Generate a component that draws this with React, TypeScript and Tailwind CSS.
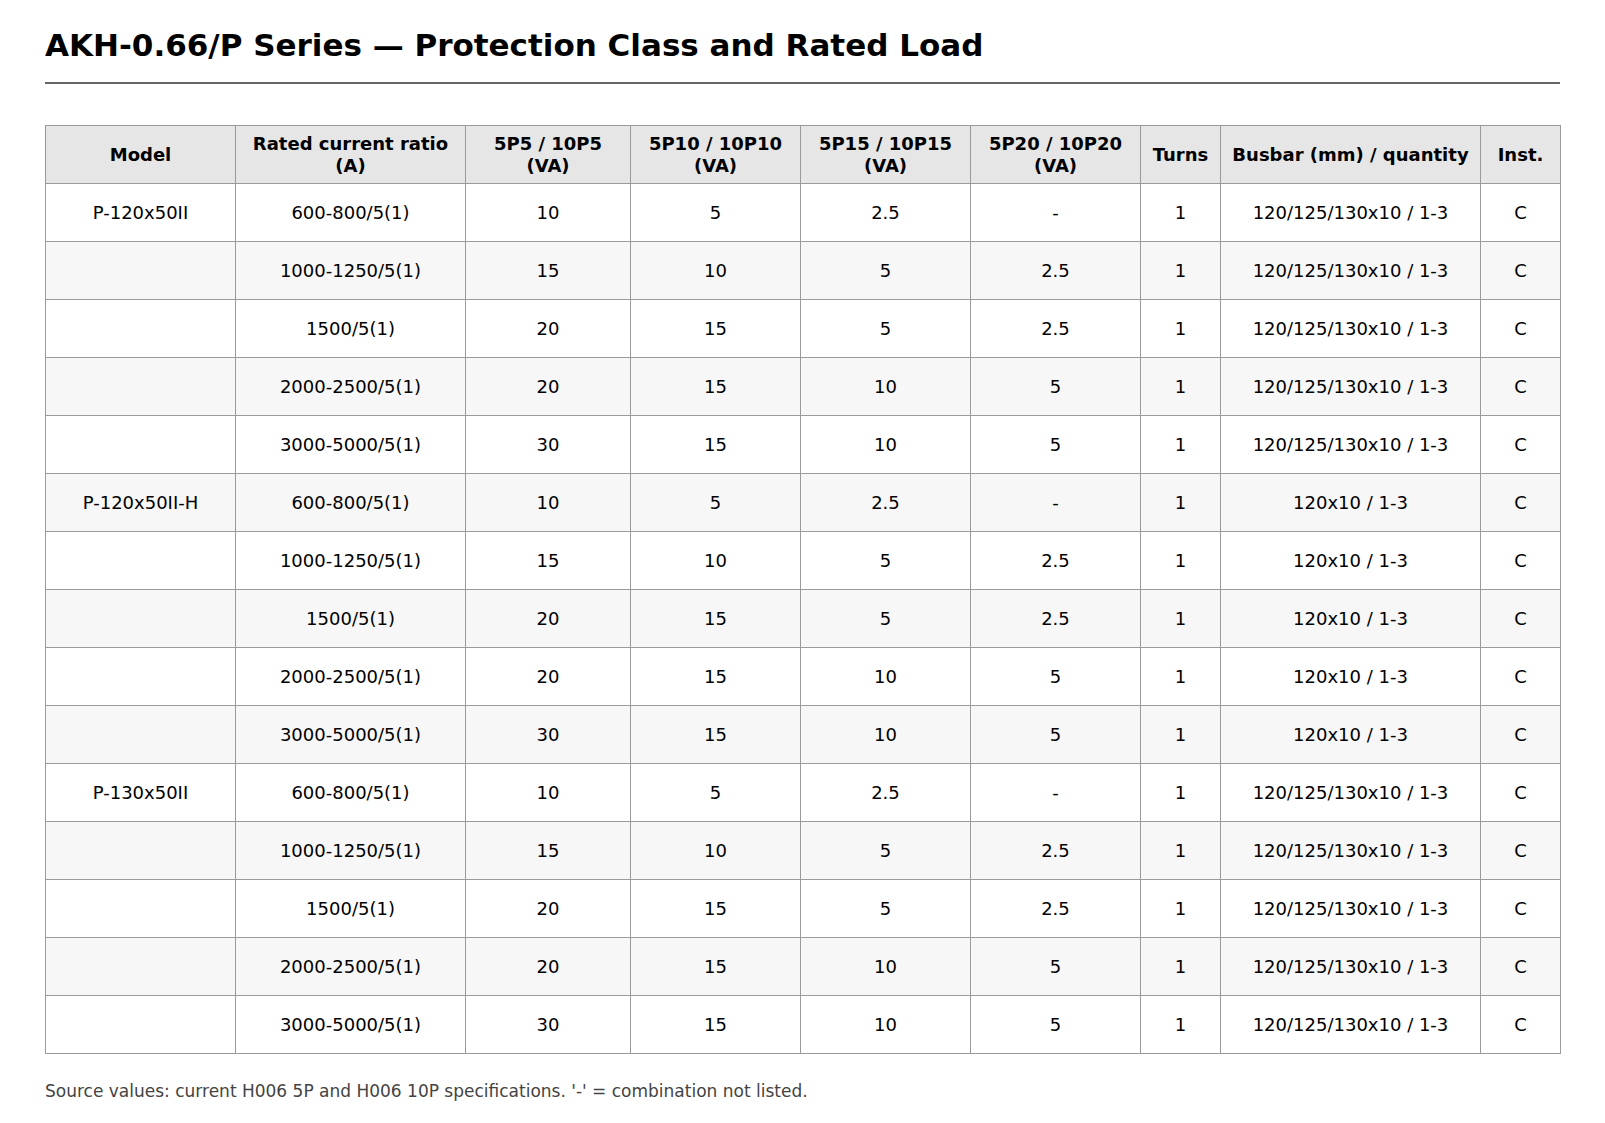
import React from "react";

type Row = [string, string, string, string, string, string, string, string, string];

const ratios = ["600-800/5(1)", "1000-1250/5(1)", "1500/5(1)", "2000-2500/5(1)", "3000-5000/5(1)"];
const vals: [string, string, string, string][] = [
  ["10", "5", "2.5", "-"],
  ["15", "10", "5", "2.5"],
  ["20", "15", "5", "2.5"],
  ["20", "15", "10", "5"],
  ["30", "15", "10", "5"],
];

const groups: [string, string][] = [
  ["P-120x50II", "120/125/130x10 / 1-3"],
  ["P-120x50II-H", "120x10 / 1-3"],
  ["P-130x50II", "120/125/130x10 / 1-3"],
];

const rows: Row[] = [];
groups.forEach(([model, busbar]) => {
  ratios.forEach((r, i) => {
    rows.push([i === 0 ? model : "", r, vals[i][0], vals[i][1], vals[i][2], vals[i][3], "1", busbar, "C"]);
  });
});

const widths = ["w-[190px]", "w-[230px]", "w-[165px]", "w-[170px]", "w-[170px]", "w-[170px]", "w-[80px]", "w-[260px]", "w-[80px]"];

const headers: React.ReactNode[] = [
  "Model",
  <>Rated current ratio<br />(A)</>,
  <>5P5 / 10P5<br />(VA)</>,
  <>5P10 / 10P10<br />(VA)</>,
  <>5P15 / 10P15<br />(VA)</>,
  <>5P20 / 10P20<br />(VA)</>,
  "Turns",
  "Busbar (mm) / quantity",
  "Inst.",
];

export default function App() {
  return (
    <div className="min-h-[1123px] bg-white px-[45px] pt-[27px] text-black" style={{ fontFamily: '"DejaVu Sans", sans-serif' }}>
      <h1 className="border-b-2 border-[#666] pb-[18px] text-[31px] font-bold leading-[1.2]">
        AKH-0.66/P Series — Protection Class and Rated Load
      </h1>
      <table className="mt-[41px] w-full table-fixed border-collapse text-[18px] leading-[1.2]">
        <colgroup>
          {widths.map((w, i) => (
            <col key={i} className={w} />
          ))}
        </colgroup>
        <thead>
          <tr className="bg-[#e6e6e6]">
            {headers.map((h, i) => (
              <th key={i} className="h-[58px] border border-[#9a9a9a] px-[6px] py-0 text-center align-middle font-bold">
                {h}
              </th>
            ))}
          </tr>
        </thead>
        <tbody>
          {rows.map((r, ri) => (
            <tr key={ri} className={ri % 2 === 1 ? "bg-[#f7f7f7]" : "bg-white"}>
              {r.map((c, ci) => (
                <td key={ci} className="h-[58px] border border-[#9a9a9a] px-[6px] py-0 text-center align-middle">
                  {c}
                </td>
              ))}
            </tr>
          ))}
        </tbody>
      </table>
      <p className="mt-[25px] text-[17px] leading-[1.5] text-[#444]">
        Source values: current H006 5P and H006 10P specifications. '-' = combination not listed.
      </p>
    </div>
  );
}
